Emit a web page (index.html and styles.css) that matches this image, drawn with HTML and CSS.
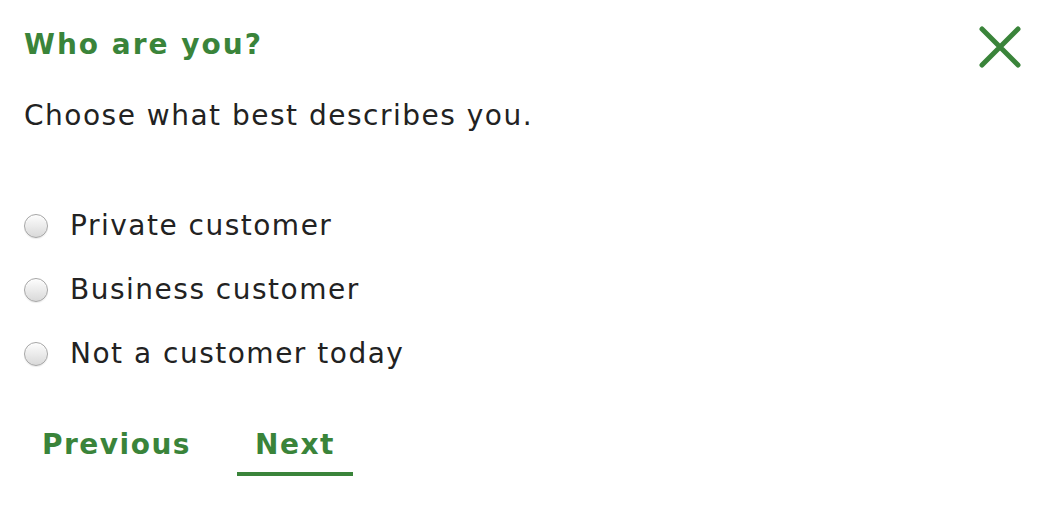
FILE: index.html
```html
<!DOCTYPE html>
<html>
<head>
<meta charset="utf-8">
<link rel="stylesheet" href="styles.css">
</head>
<body>
<div class="dialog">
  <div class="header">
    <h1 class="title">Who are you?</h1>
    <button class="close" aria-label="Close">
      <svg width="44" height="44" viewBox="0 0 44 44"><path d="M4 4 L40 40 M40 4 L4 40" stroke="#3a843a" stroke-width="5" stroke-linecap="round" fill="none"/></svg>
    </button>
  </div>
  <p class="intro">Choose what best describes you.</p>
  <div class="options">
    <label class="option"><span class="radio"></span><span class="label">Private customer</span></label>
    <label class="option"><span class="radio"></span><span class="label">Business customer</span></label>
    <label class="option"><span class="radio"></span><span class="label">Not a customer today</span></label>
  </div>
  <div class="nav">
    <button class="navbtn">Previous</button>
    <button class="navbtn active">Next</button>
  </div>
</div>
</body>
</html>
```
FILE: styles.css
```css
html, body {
  margin: 0;
  padding: 0;
  background: #fff;
}
body {
  font-family: "DejaVu Sans", Verdana, sans-serif;
  color: #222;
}
.dialog {
  padding: 22px 24px 0 24px;
}
.header {
  display: flex;
  justify-content: space-between;
  align-items: flex-start;
}
.title {
  margin: 0;
  font-size: 28px;
  letter-spacing: 2px;
  font-weight: bold;
  color: #3a843a;
  line-height: 46px;
}
.close {
  background: none;
  border: none;
  padding: 0;
  margin: 3px 0 0 0;
  width: 44px;
  height: 44px;
  cursor: pointer;
}
.close svg { display: block; }
.intro {
  margin: 27px 0 0 0;
  font-size: 28px;
  letter-spacing: 1.5px;
  line-height: 40px;
}
.options {
  margin-top: 70px;
  display: flex;
  flex-direction: column;
  gap: 24px;
}
.option {
  display: flex;
  align-items: center;
  gap: 22px;
  font-size: 28px;
  letter-spacing: 1.5px;
  line-height: 40px;
}
.radio {
  width: 22px;
  height: 22px;
  border-radius: 50%;
  border: 1px solid #a6a6a6;
  background: linear-gradient(#fdfdfd, #d9d9d9);
  box-shadow: inset 0 1px 1px rgba(255,255,255,0.8), 0 1px 1px rgba(0,0,0,0.08);
  flex: none;
}
.nav {
  margin-top: 48px;
  display: flex;
  gap: 28px;
}
.navbtn {
  background: none;
  border: none;
  font-family: "DejaVu Sans", Verdana, sans-serif;
  font-size: 28px;
  letter-spacing: 1.5px;
  font-weight: bold;
  color: #3a843a;
  padding: 6px 18px 11px 18px;
  border-bottom: 4px solid transparent;
  cursor: pointer;
}
.navbtn.active {
  border-bottom-color: #3a843a;
}
```
